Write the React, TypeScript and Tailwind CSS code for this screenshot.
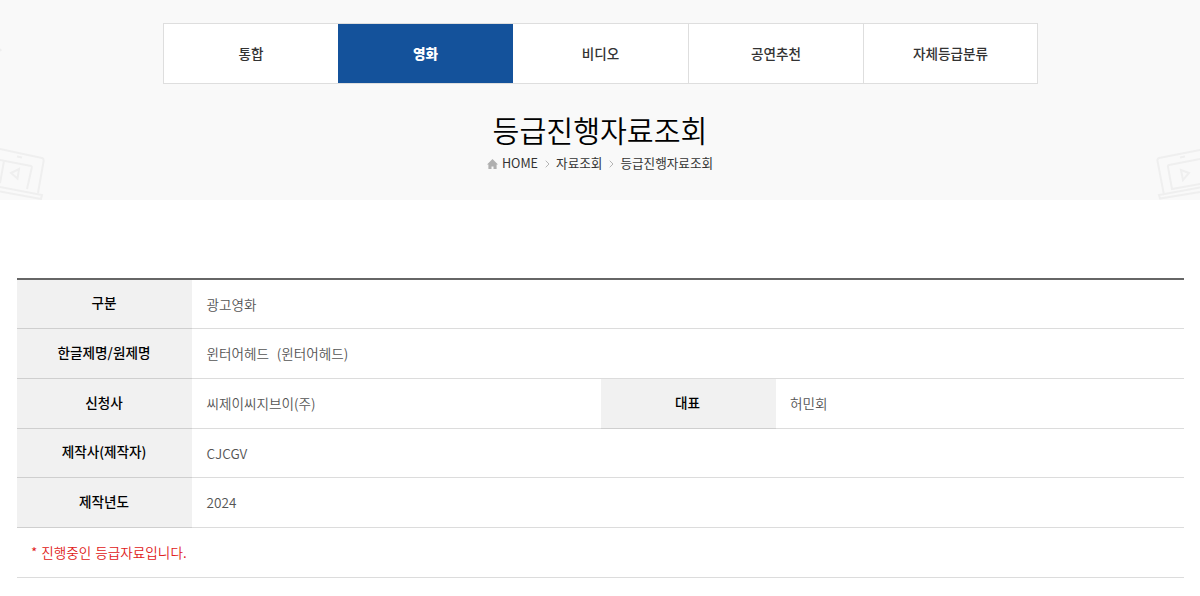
import { Fragment } from "react";
import clsx from "clsx";

const TABS = ["통합", "영화", "비디오", "공연추천", "자체등급분류"];
const ACTIVE_TAB = "영화";
const BREADCRUMB = ["HOME", "자료조회", "등급진행자료조회"];

const ROWS = [
  { height: "h-[49px]", cells: [["구분", "광고영화"]] },
  { height: "h-[50px]", cells: [["한글제명/원제명", "윈터어헤드\u00a0 (윈터어헤드)"]] },
  {
    height: "h-[50px]",
    cells: [
      ["신청사", "씨제이씨지브이(주)"],
      ["대표", "허민회"],
    ],
  },
  { height: "h-[49px]", cells: [["제작사(제작자)", "CJCGV"]] },
  { height: "h-[50px]", cells: [["제작년도", "2024"]] },
];

function HomeIcon() {
  return (
    <svg width="11" height="10" viewBox="0 0 11 10" className="mr-[4px] mt-[2px]" fill="#b0b0b0">
      <path d="M5.5 0 11 5.4H9.6V10H6.5V7.6H4.5V10H1.4V5.4H0Z" />
    </svg>
  );
}

function Chevron() {
  return (
    <svg
      width="5"
      height="8"
      viewBox="0 0 5 8"
      className="mx-[6.5px] mt-[2px]"
      fill="none"
      stroke="#b5b5b5"
    >
      <path d="M.7.7 4 4 .7 7.3" />
    </svg>
  );
}

function LaptopLeft() {
  return (
    <svg
      width="48"
      height="154"
      viewBox="0 -100 48 154"
      className="absolute bottom-0 left-0"
      fill="none"
      stroke="#efefef"
      strokeWidth="2"
    >
      <path d="M0 -97 1 -95" />
      <path d="M0 3 42 12Q44 12.5 43.6 15L38 47M0 14 31 20Q32 20 31.7 22L27 43M4 15 0 37" />
      <path d="M17 10.5 22 11.5M19 23 11 27 17.5 32.5Z" />
      <path d="M0 41 42 49 41 53 0 45.5" />
    </svg>
  );
}

function LaptopRight() {
  return (
    <svg
      width="44"
      height="54"
      viewBox="0 0 44 54"
      className="absolute bottom-0 right-0"
      fill="none"
      stroke="#efefef"
      strokeWidth="2"
    >
      <path d="M44 4 3 12Q1 12.500 1.500 15L8 49M44 13 13 19Q11.500 19.500 12 21L16 43 44 38" />
      <path d="M25 24 33 27 27 34ZM24 11.500 29 10.500" />
      <path d="M44 41.500 3 49 4 52.500 44 46" />
    </svg>
  );
}

function Header() {
  return (
    <header className="relative flex h-[200px] flex-col items-center bg-[#f9f9f9] pt-6">
      <LaptopLeft />
      <LaptopRight />
      <nav className="-mt-px ml-px flex h-[61px] w-[875px] border border-[#dedede] bg-white">
        {TABS.map((tab) => (
          <a
            key={tab}
            className={clsx(
              "flex flex-none items-center justify-center text-[13.6px]",
              tab === ACTIVE_TAB
                ? "-ml-px w-[175px] bg-[#14529b] font-black text-white"
                : "w-[175px] border-r border-[#dedede] font-medium text-[#333] last:w-[173px] last:border-r-0 nth-3:w-[176px]",
            )}
          >
            {tab}
          </a>
        ))}
      </nav>
      <h1 className="mt-6 text-[29.2px] font-[350] leading-[42px] text-black">등급진행자료조회</h1>
      <div className="mt-[3px] flex items-center text-[12.6px] leading-[20px] text-[#333]">
        <HomeIcon />
        {BREADCRUMB.map((item, i) => (
          <Fragment key={item}>
            {i > 0 && <Chevron />}
            <span>{item}</span>
          </Fragment>
        ))}
      </div>
    </header>
  );
}

export default function App() {
  return (
    <div className="h-[596px] overflow-hidden bg-white font-['Noto_Sans_CJK_KR','Noto_Sans',sans-serif]">
      <Header />
      <main className="ml-[17px] mr-4 mt-[78px] border-t-2 border-[#666] text-[13.6px]">
        {ROWS.map((row) => (
          <dl key={row.cells[0][0]} className={clsx("flex border-b border-[#dcdcdc]", row.height)}>
            {row.cells.map(([label, value]) => (
              <div key={label} className="flex flex-1">
                <dt className="-mb-px flex w-[175px] items-center justify-center border-b border-[#cfcfcf] bg-[#f1f1f1] pb-[3px] pr-px font-medium text-black">
                  {label}
                </dt>
                <dd className="flex items-center pl-[14.5px] font-[350] text-[#555] [word-spacing:0.8px]">
                  {value}
                </dd>
              </div>
            ))}
          </dl>
        ))}
        <p className="flex h-[50px] items-center border-b border-[#dcdcdc] pl-[14px] font-[350] text-[#e02020] [word-spacing:1px]">
          * 진행중인 등급자료입니다.
        </p>
      </main>
    </div>
  );
}
